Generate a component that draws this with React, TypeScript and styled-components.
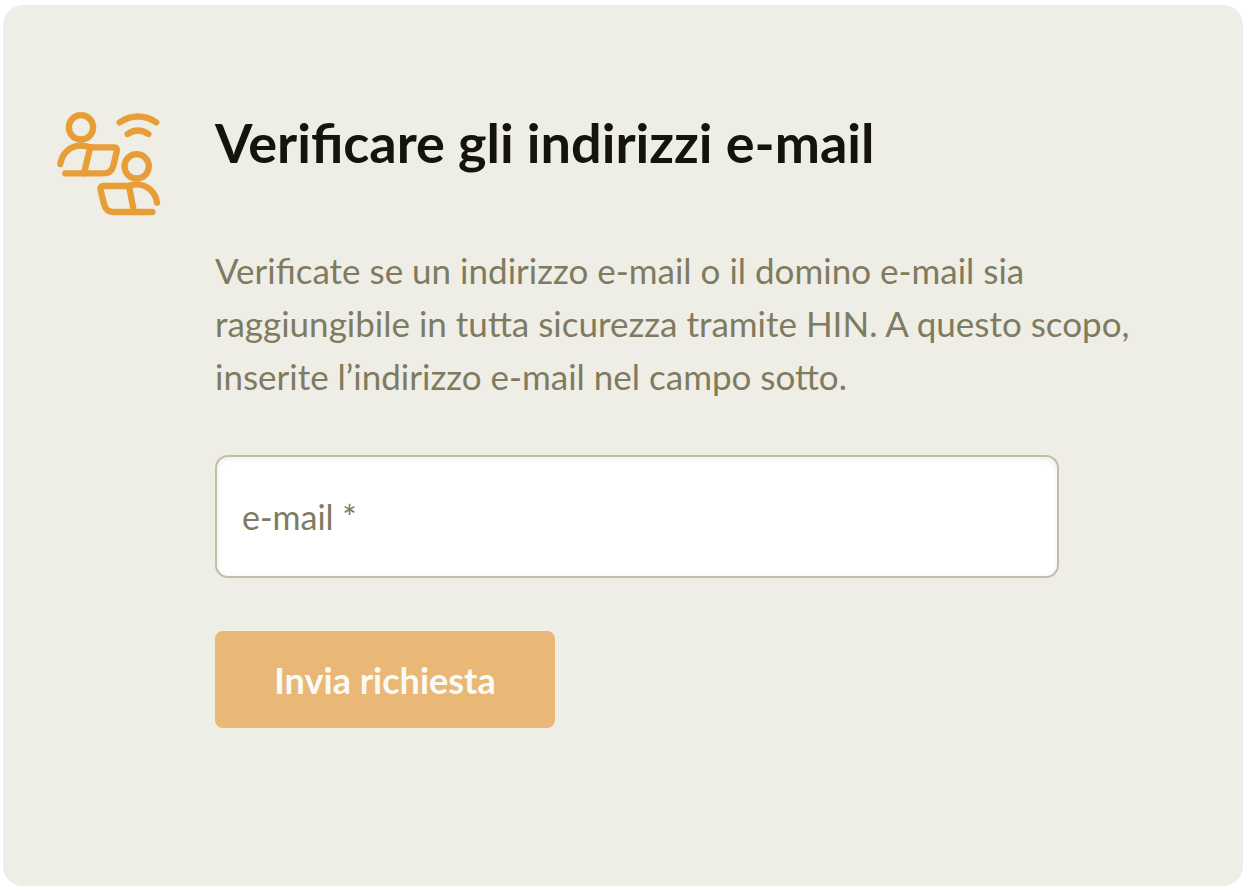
import React, { useState } from "react";
import styled, { createGlobalStyle } from "styled-components";

const GlobalStyle = createGlobalStyle`
  *, *::before, *::after { box-sizing: border-box; }
  body {
    margin: 0;
    background: #ffffff;
    font-family: Lato, "Liberation Sans", sans-serif;
  }
`;

const Page = styled.main`
  display: flex;
  min-height: 100vh;
  padding: 5px 5px 4px 3px;
`;

const Card = styled.section`
  flex: 1;
  display: flex;
  align-items: flex-start;
  gap: 54px;
  padding: 107px 100px 107px 54px;
  border-radius: 20px;
  background: #efeee6;
`;

const Icon = styled.svg`
  flex: none;
  width: 104px;
  height: 104px;
  fill: none;
  stroke: #e79e37;
  stroke-width: 19px;
  stroke-linecap: round;
  stroke-linejoin: round;
`;

const Content = styled.div`
  flex: 1;
  min-width: 0;
`;

const Title = styled.h1`
  margin: 0;
  color: #14130d;
  font-size: 54px;
  font-weight: 700;
  line-height: 62px;
`;

const Description = styled.p`
  max-width: 930px;
  margin: 70px 0 0;
  color: #7f7b5f;
  font-size: 35px;
  line-height: 53px;
`;

const Form = styled.form`
  display: flex;
  flex-direction: column;
  align-items: flex-start;
  gap: 53px;
  max-width: 844px;
  margin-top: 52px;
`;

const EmailInput = styled.input`
  width: 100%;
  height: 123px;
  padding: 0 25px;
  border: 2px solid #c0bda8;
  border-radius: 13px;
  background: #ffffff;
  box-shadow: inset 0 2px 6px rgba(0, 0, 0, 0.08);
  color: #14130d;
  font-family: inherit;
  font-size: 34px;

  &::placeholder {
    color: #7f7b5f;
    opacity: 1;
  }
`;

const SubmitButton = styled.button`
  min-width: 340px;
  height: 97px;
  padding: 0 48px;
  border: 0;
  border-radius: 8px;
  background: #e9b877;
  color: #fafaf7;
  font-family: inherit;
  font-size: 36px;
  font-weight: 700;
  cursor: pointer;
`;

function PeopleIcon() {
  return (
    <Icon viewBox="21 21 312 312" aria-hidden="true">
      <circle cx="93" cy="67" r="36.5" />
      <path d="M31 177C36 145 60 122 93 122C105 122 112 124 121 127" />
      <path d="M121 127H191Q203 127 200 140L190 182Q184 205 160 205H46" />
      <path d="M121 127L102 205" />
      <path d="M209 52Q264 17 319 52" />
      <path d="M233 87Q264 66 295 87" />
      <circle cx="260" cy="184" r="36.5" />
      <path d="M321 293C317 262 292 238 258 238C250 238 244 240 237 243" />
      <path d="M237 243H161Q149 243 152 256L162 297Q168 321 190 321H307" />
      <path d="M237 243L252 321" />
    </Icon>
  );
}

export default function App() {
  const [email, setEmail] = useState("");

  return (
    <>
      <GlobalStyle />
      <Page>
        <Card>
          <PeopleIcon />
          <Content>
            <Title>Verificare gli indirizzi e-mail</Title>
            <Description>
              Verificate se un indirizzo e-mail o il domino e-mail sia
              raggiungibile in tutta sicurezza tramite HIN. A questo scopo,
              inserite l’indirizzo e-mail nel campo sotto.
            </Description>
            <Form onSubmit={(event) => event.preventDefault()}>
              <EmailInput
                type="email"
                name="email"
                aria-label="e-mail"
                placeholder="e-mail *"
                required
                value={email}
                onChange={(event) => setEmail(event.target.value)}
              />
              <SubmitButton type="submit">Invia richiesta</SubmitButton>
            </Form>
          </Content>
        </Card>
      </Page>
    </>
  );
}
